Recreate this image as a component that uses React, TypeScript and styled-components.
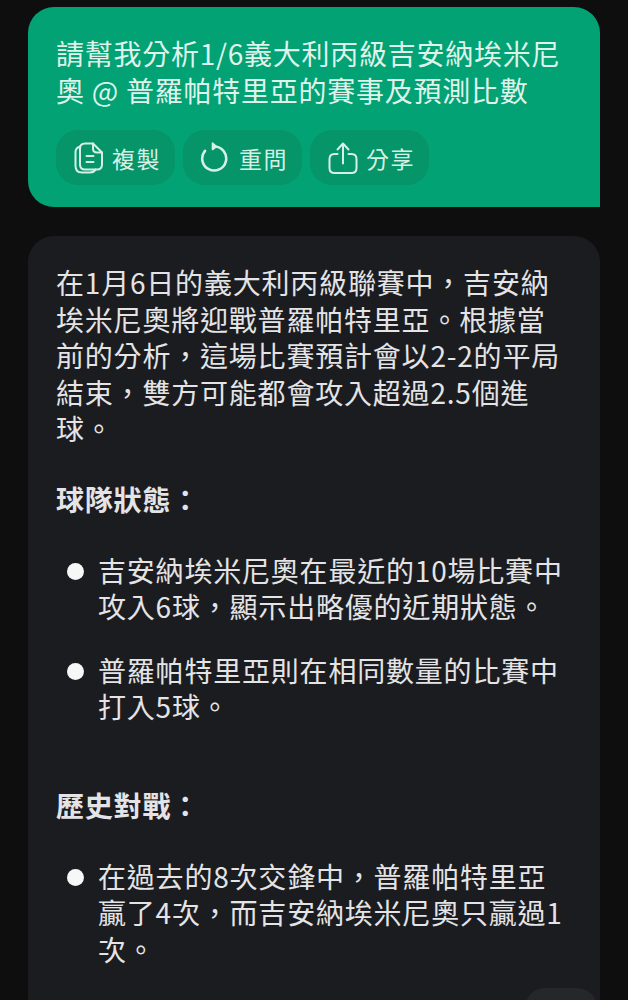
import { createGlobalStyle } from 'styled-components';
import styled from 'styled-components';

const GlobalStyle = createGlobalStyle`
  html, body {
    margin: 0;
    padding: 0;
    height: 1000px;
    overflow: hidden;
    background: #0e0e0f;
  }
`;

const Page = styled.div`
  height: 1000px;
  overflow: hidden;
  padding: 7px 28px 0;
  box-sizing: border-box;
  display: flex;
  flex-direction: column;
  gap: 29px;
  font-family: "Noto Sans CJK TC", "Noto Sans", sans-serif;
`;

const UserBubble = styled.section`
  background: #02a274;
  border-radius: 26px 26px 0 26px;
  padding: 28px 28px 22px;
  height: 200px;
  box-sizing: border-box;
  flex-shrink: 0;
`;

const Question = styled.p`
  margin: 0;
  color: #dff3eb;
  font-size: 28px;
  line-height: 37px;
  letter-spacing: 0.75px;
`;

const Actions = styled.div`
  display: flex;
  gap: 8px;
  margin-top: 21px;
`;

const ActionButton = styled.button`
  display: flex;
  align-items: center;
  gap: 7px;
  width: 119px;
  height: 55px;
  padding: 0 0 0 17px;
  box-sizing: border-box;
  border: 0;
  border-radius: 22px;
  background: #069469;
  color: #d6f0e6;
  font: inherit;
  font-size: 23px;
  letter-spacing: 1.6px;
`;

const AnswerCard = styled.section`
  position: relative;
  flex: 1;
  background: #1b1c20;
  border-radius: 26px 26px 0 0;
  padding: 28px 28px 0;
  color: #e4e4e6;
  font-size: 28px;
  line-height: 36.6px;
  letter-spacing: 0.8px;
`;

const Paragraph = styled.p`
  margin: 0;
`;

const Heading = styled.h3`
  margin: 34px 0 0;
  font-size: inherit;
  line-height: inherit;
  font-weight: 700;
`;

const BulletList = styled.ul`
  list-style: none;
  margin: 34px 0 62px;
  padding: 0 0 0 42px;
`;

const Bullet = styled.li`
  position: relative;

  & + & {
    margin-top: 27px;
  }

  &::before {
    content: '';
    position: absolute;
    left: -31px;
    top: 11px;
    width: 17px;
    height: 17px;
    border-radius: 50%;
    background: #f7f7f8;
  }
`;

const ScrollPill = styled.div`
  position: absolute;
  right: 3px;
  top: 752px;
  width: 72px;
  height: 40px;
  border-radius: 22px;
  background: #26272b;
`;

const CopyIcon = () => (
  <svg width="32" height="34" viewBox="0 0 32 34" fill="none" stroke="currentColor" strokeWidth="2" strokeLinecap="round" strokeLinejoin="round">
    <path d="M7 5.500C4 6.500 2.500 8.500 2.500 11v14c0 4 2.500 6.500 6.500 6.500h8c2.500 0 4.500-1 5.500-3" />
    <path d="M12 2.500h8l9 9v12c0 3-2 5-5 5H12c-3 0-5-2-5-5V7.500c0-3 2-5 5-5z" />
    <path d="M20 2.500v5c0 2.500 1.500 4 4 4h5" />
    <path d="M13.500 15h7M13.500 21h7" />
  </svg>
);

const RetryIcon = () => (
  <svg width="32" height="34" viewBox="0 0 32 34" fill="none" stroke="currentColor" strokeWidth="2.6" strokeLinecap="round" strokeLinejoin="round">
    <path d="M14.500 5.500A12 12 0 1 1 5 9.800" />
    <path d="M12.500 2l4 3.500-4 3z" fill="currentColor" strokeWidth="1.600" />
  </svg>
);

const ShareIcon = () => (
  <svg width="32" height="34" viewBox="0 0 32 34" fill="none" stroke="currentColor" strokeWidth="2" strokeLinecap="round" strokeLinejoin="round">
    <path d="M10.500 13H7.500c-3 0-5 2-5 5v9c0 3 2 5 5 5h17c3 0 5-2 5-5v-9c0-3-2-5-5-5h-3" />
    <path d="M16 22.500V3M10.500 8.500L16 2.500l5.500 6" />
  </svg>
);

const App = (): JSX.Element => {
  return (
    <>
      <GlobalStyle />
      <Page>
        <UserBubble>
          <Question>請幫我分析1/6義大利丙級吉安納埃米尼<br />奧 @ 普羅帕特里亞的賽事及預測比數</Question>
          <Actions>
            <ActionButton><CopyIcon />複製</ActionButton>
            <ActionButton><RetryIcon />重問</ActionButton>
            <ActionButton><ShareIcon />分享</ActionButton>
          </Actions>
        </UserBubble>
        <AnswerCard>
          <Paragraph>
            在1月6日的義大利丙級聯賽中，吉安納<br />
            埃米尼奧將迎戰普羅帕特里亞。根據當<br />
            前的分析，這場比賽預計會以2-2的平局<br />
            結束，雙方可能都會攻入超過2.5個進<br />
            球。
          </Paragraph>
          <Heading>球隊狀態：</Heading>
          <BulletList>
            <Bullet>吉安納埃米尼奧在最近的10場比賽中<br />攻入6球，顯示出略優的近期狀態。</Bullet>
            <Bullet>普羅帕特里亞則在相同數量的比賽中<br />打入5球。</Bullet>
          </BulletList>
          <Heading>歷史對戰：</Heading>
          <BulletList>
            <Bullet>在過去的8次交鋒中，普羅帕特里亞<br />贏了4次，而吉安納埃米尼奧只贏過1<br />次。</Bullet>
          </BulletList>
          <ScrollPill />
        </AnswerCard>
      </Page>
    </>
  );
};

export default App;
